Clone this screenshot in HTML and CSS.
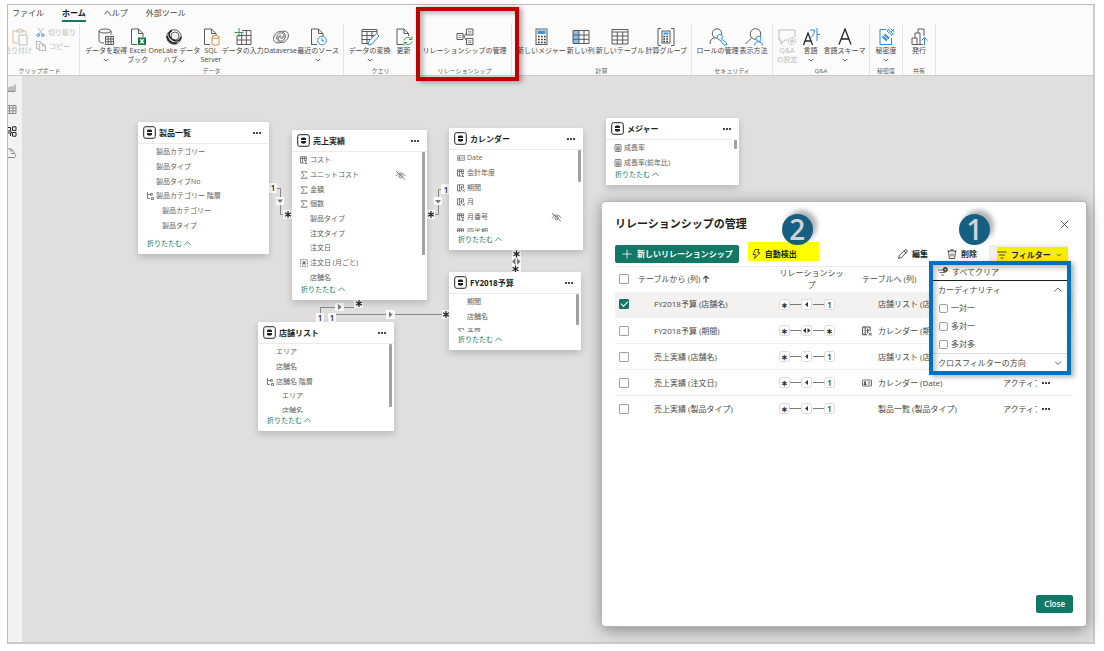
FILE: index.html
```html
<!DOCTYPE html>
<html lang="ja">
<head>
<meta charset="utf-8">
<title>リレーションシップの管理</title>
<link rel="stylesheet" href="styles.css">
</head>
<body>
<svg class="defs" aria-hidden="true">
  <defs>
    <symbol id="chev-down" viewBox="0 0 8 8"><path d="M1 2.500 4 5.500 7 2.500"/></symbol>
    <symbol id="chev-up" viewBox="0 0 8 8"><path d="M.5 5.500 4 2 7.500 5.500"/></symbol>
    <symbol id="table-badge" viewBox="0 0 13 13"><rect x=".7" y=".7" width="11.600" height="11.600" rx="2"/><path class="solid" d="M4 4.600C4 3 9 3 9 4.600V6H4zM4 7h5v1.500c0 1.500-5 1.500-5 0z"/></symbol>
    <symbol id="sigma" viewBox="0 0 8 8"><path d="M6.800 2V.8H1.200L4.200 4 1.200 7.300h5.600V6"/></symbol>
    <symbol id="calc-col" viewBox="0 0 8 8"><path d="M4 7H.5V.8h6v2.700M.5 2.600h6M2.500.8V7M4.500.8v3M4 4.400h2.800L5 6l2 1.600H4.500"/></symbol>
    <symbol id="fx-col" viewBox="0 0 8 8"><path d="M4 7H.5V.8h6v3.500M2.500.8V7M4.500 2v4M3.500 3.500h2M5.500 5.300l2.300 2.400M7.800 5.300 5.500 7.700"/></symbol>
    <symbol id="hier" viewBox="0 0 8 8"><path d="M1.500 0v6.500H4M1.500 2.500H4M4.500 1.500h1.800v1.800H4.500zM5.500 5.500h2v2h-2z"/></symbol>
    <symbol id="id-card" viewBox="0 0 10 8"><rect x=".5" y="1" width="9" height="6" rx=".5"/><path d="M5.800 3h2.500M5.800 5h2.500"/><path class="solid" d="M2 2.500h2v1.700H2zM1.700 4.600h2.700V6H1.700z"/></symbol>
    <symbol id="spark" viewBox="0 0 8 8"><path stroke-dasharray="1.500 1" d="M.6.600h6.800v6.800H.6z"/><path d="M4 1.800v4.400M1.800 4h4.400M2.500 2.500l3 3M5.500 2.500l-3 3"/></symbol>
    <symbol id="measure" viewBox="0 0 8 8"><rect x="1" y=".5" width="6" height="7" rx=".8"/><path d="M2.200 2.200h3.600M2.200 4h3.600M2.200 5.800h3.600M3 3.500v3M5 3.500v3"/></symbol>
    <symbol id="hidden" viewBox="0 0 11 10"><path d="M1 6C3 2 8 2 10 6M1 1l9 8.500"/><circle cx="5.500" cy="6" r="1.700"/></symbol>
    <symbol id="rel-one" viewBox="0 0 56 11"><path class="line" d="M10 5.500h12M34 5.500h12"/><rect x=".5" y=".5" width="10" height="10" rx="2"/><rect x="22.500" y=".5" width="10" height="10" rx="2"/><rect x="45.500" y=".5" width="10" height="10" rx="2"/><path class="solid" d="M29 3v5l-3-2.500z"/></symbol>
    <symbol id="rel-many" viewBox="0 0 56 11"><path class="line" d="M10 5.500h12M34 5.500h12"/><rect x=".5" y=".5" width="10" height="10" rx="2"/><rect x="22.500" y=".5" width="10" height="10" rx="2"/><rect x="45.500" y=".5" width="10" height="10" rx="2"/><path class="solid" d="M27 3v5l-3-2.500zM28.500 3v5l3-2.500z"/></symbol>
  </defs>
</svg>

<div class="app">
  <header class="ribbon">
    <nav class="tabs">
      <button class="tab">ファイル</button>
      <button class="tab tab-active">ホーム</button>
      <button class="tab">ヘルプ</button>
      <button class="tab">外部ツール</button>
    </nav>
    <div class="groups">
      <section class="group group-clip">
        <div class="tools">
          <button class="tool tool-paste dim"><svg class="ico" viewBox="0 0 18 18"><path class="or" d="M6 3H2v12h5M12 3h3v3"/><path d="M6 4V2h2c0-1.500 2-1.500 2 0h2v2zM8 7h8v10H8z"/></svg><span>貼り付け</span></button>
          <div class="clip-small">
            <button class="mini dim"><svg viewBox="0 0 9 9"><path d="M2 0l4 6M7 0 3 6"/><circle class="bl" cx="2.200" cy="7.200" r="1.300"/><circle class="bl" cx="6.800" cy="7.200" r="1.300"/></svg>切り取り</button>
            <button class="mini dim"><svg viewBox="0 0 9 9"><path d="M3 7H.5V.5H4l1 1M3 2.500h3.500l2 2v4H3zM6 2.500v2h2.500"/></svg>コピー</button>
          </div>
        </div>
        <h2>クリップボード</h2>
      </section>
      <section class="group group-data">
        <div class="tools">
          <button class="tool"><svg class="ico" viewBox="0 0 18 18"><ellipse cx="8" cy="3" rx="6" ry="2"/><path d="M2 3v10c0 1 2 2 5 2M14 3v4"/><path d="M8.500 8.500h8v8h-8zM8.500 11h8M8.500 13.700h8M11.200 8.500v8M13.900 8.500v8"/></svg><span>データを取得</span><svg class="chev"><use href="#chev-down"/></svg></button>
          <button class="tool"><svg class="ico" viewBox="0 0 18 18"><path d="M8 16.500H2.500V1h7l4.500 4.500V9M9.500 1v4.500H14"/><path class="grf" d="M9 9.500h8V17H9z"/><path class="wh" d="m11.300 11.200 3.400 4.200M14.700 11.200l-3.400 4.200"/></svg><span>Excel<br>ブック</span></button>
          <button class="tool"><svg class="ico" viewBox="0 0 18 18"><circle cx="9" cy="9" r="7.300"/><circle cx="10" cy="8" r="4"/><path class="heavy" d="M7 2.500C2 5 4 10 8 12s7 1 8-3M2 8c1 5 5 8 10 7"/></svg><span>OneLake データ<br>ハブ <svg class="chev chev-in"><use href="#chev-down"/></svg></span></button>
          <button class="tool"><svg class="ico" viewBox="0 0 18 18"><path d="M8 16.500H2.500V1h7l4.500 4.500V7M9.500 1v4.500H14"/><path class="or fillw" d="M10 9v7c0 1.500 7 1.500 7 0V9"/><ellipse class="or fillw" cx="13.500" cy="9" rx="3.500" ry="1.500"/></svg><span>SQL<br>Server</span></button>
          <button class="tool"><svg class="ico" viewBox="0 0 18 18"><path d="M8 2.500h9v14H3V8M3 7.500h14M8 12h9M3 12h5M7.700 5v11.500M12.400 2.500v14"/><path class="gr" d="M5 0v9M.5 4.500h9"/></svg><span>データの入力</span></button>
          <button class="tool"><svg class="ico" viewBox="0 0 18 18"><path d="M7.500 14.800C3 15.500.8 12.500 1.800 9 3 4.500 8 2 11.500 4.500c3 2.300 2 7-1 8.300-2.500 1-5-.8-4.300-3.300.6-2 3.300-2.300 4-.7M10.500 3.200c4.500-.7 6.700 2.300 5.700 5.800-1.200 4.500-6.200 7-9.700 4.500-3-2.300-2-7 1-8.300 2.500-1 5 .8 4.300 3.300-.6 2-3.300 2.300-4 .7"/></svg><span>Dataverse</span></button>
          <button class="tool"><svg class="ico" viewBox="0 0 18 18"><path d="M8 16.500H2.500V1h7l4.500 4.500V8M9.500 1v4.500H14"/><circle class="bl fillw" cx="13" cy="12.500" r="4.300"/><path class="bl" d="M13 10v3h2"/></svg><span>最近のソース</span><svg class="chev"><use href="#chev-down"/></svg></button>
        </div>
        <h2>データ</h2>
      </section>
      <section class="group group-query">
        <div class="tools">
          <button class="tool"><svg class="ico" viewBox="0 0 18 18"><path d="M16 6V1.500H1v14h6M1 3.500h15M1 7.500h13M1 11.500h9M6 3v12M11 3v7"/><path class="bl fillw" d="m8 13-1 4 4-1 7-8-2.500-2.500z"/></svg><span>データの変換</span><svg class="chev"><use href="#chev-down"/></svg></button>
          <button class="tool"><svg class="ico" viewBox="0 0 18 18"><path d="M8 16.500H2V1h7l4.500 4.500V8M9 1v4.500h4.500"/><path class="gr" d="M9 12.500c1-4 6-4 7.500-1M17 8.500v3h-3M17 13.500c-1 4-6 4-7.500 1M9 17.500v-3h3"/></svg><span>更新</span></button>
        </div>
        <h2>クエリ</h2>
      </section>
      <section class="group group-rel">
        <div class="tools">
          <button class="tool"><svg class="ico" viewBox="0 0 18 18"><path d="M1 5.500h6v6H1zM10.500 1h6.500v6h-6.500zM10.500 10.500h6.500v6h-6.500zM7 8h2M10.500 5 8 8.500l2.500 4"/><path class="gy" d="M2.500 7.500h3M2.500 9.500h3M12 3.300h3.500M12 5h3.500M12 12.800h3.500M12 14.500h3.500"/></svg><span>リレーションシップの管理</span></button>
        </div>
        <h2>リレーションシップ</h2>
      </section>
      <section class="group group-calc">
        <div class="tools">
          <button class="tool"><svg class="ico" viewBox="0 0 18 18"><rect x="4" y="1" width="11" height="15.500"/><path class="blf" d="M5.500 2.500h8V6h-8z"/><path class="dots" d="M6 8.500h8M6 11.500h8M6 14.500h8"/></svg><span>新しいメジャー</span></button>
          <button class="tool"><svg class="ico" viewBox="0 0 18 18"><path class="blp" d="M1 2.500h6v13H1z"/><path d="M1 2.500h16v13H1zM1 7h16M1 11.300h16M7 2.500v13M12 2.500v13"/></svg><span>新しい列</span></button>
          <button class="tool"><svg class="ico" viewBox="0 0 18 18"><path d="M1 1.500h16v14.500H1zM1 4h16M1 8h16M1 12h16M6.300 4v12M11.700 4v12"/></svg><span>新しいテーブル</span></button>
          <button class="tool"><svg class="ico" viewBox="0 0 18 18"><path d="M4 .5H1v17h3M14 .5h3v17h-3"/><rect x="5" y="3" width="8" height="12"/><path class="blf" d="M6.500 4.500h5v2h-5z"/><path class="dots" d="M6.300 8.500h5.500M6.300 11h5.500M6.300 13.400h5.500"/></svg><span>計算グループ</span></button>
        </div>
        <h2>計算</h2>
      </section>
      <section class="group group-sec">
        <div class="tools">
          <button class="tool"><svg class="ico" viewBox="0 0 18 18"><circle cx="8" cy="5.500" r="4.700"/><path d="M1 16c0-4 2-6 5-6.500"/><path class="bl fillw" d="M8.500 9a2.500 2.500 0 1 1 4 2l5 4v2h-2.500l-4-5c-1.500 0-2.500-1-2.500-3z"/></svg><span>ロールの管理</span></button>
          <button class="tool"><svg class="ico" viewBox="0 0 18 18"><circle cx="10.500" cy="6" r="5.300"/><path d="m6.500 10-6 6"/><circle class="bl fillw" cx="13.500" cy="10.800" r="2.500"/><path class="bl" d="M9.500 17.500c0-5 8-5 8 0"/></svg><span>表示方法</span></button>
        </div>
        <h2>セキュリティ</h2>
      </section>
      <section class="group group-qa">
        <div class="tools">
          <button class="tool dim"><svg class="ico" viewBox="0 0 18 18"><path d="M9 12H7l-4 4v-4H1V2h16v7"/><circle cx="14" cy="13" r="1.300"/><circle cx="14" cy="13" r="3.500" stroke-dasharray="2 .7"/></svg><span>Q&amp;A<br>の設定</span></button>
          <button class="tool"><svg class="ico" viewBox="0 0 18 18"><path class="dark" d="m1.500 17 4.500-12 4.500 12M3 13h6"/><path class="bl" d="M8 2h4.500c0 4-1.500 6-4 8M15 0v13M15 6.500h3"/></svg><span>言語</span><svg class="chev"><use href="#chev-down"/></svg></button>
          <button class="tool"><svg class="ico" viewBox="0 0 18 18"><path class="dark" d="M3 16.500 9 1l6 15.500M5.300 11h7.400"/></svg><span>言語スキーマ</span><svg class="chev"><use href="#chev-down"/></svg></button>
        </div>
        <h2>Q&amp;A</h2>
      </section>
      <section class="group group-one">
        <div class="tools">
          <button class="tool"><svg class="ico" viewBox="0 0 18 18"><path class="bl" d="M9.500 1.500H3v15h11.500V10"/><path class="bl2" d="m5.500 8.500 4.500 4M7.500 6.500l4.500 4"/><path class="bl" d="m10 3 5 4.500M11 1.500l5 4.500M13.500.5l4 3.500M17 1l-3 3M10 3l2-2M15 7.500l2-2"/></svg><span>秘密度</span><svg class="chev"><use href="#chev-down"/></svg></button>
        </div>
        <h2>秘密度</h2>
      </section>
      <section class="group group-one">
        <div class="tools">
          <button class="tool"><svg class="ico" viewBox="0 0 18 18"><path d="M2 10h5v6.500H2zM5 10V5h5v11.500H7M8 5V1h6v7M10 16.500h3"/><path class="bl" d="M14.500 17.500V9.500M11.500 12.500l3-3 3 3"/></svg><span>発行</span></button>
        </div>
        <h2>共有</h2>
      </section>
    </div>
  </header>

  <div class="workspace">
    <aside class="rail">
      <button aria-label="レポート"><svg viewBox="0 0 9 11"><path d="M0 9.500h7V2.500M5 9.500v-5M3 9.500V4M1 9.500V5"/></svg></button>
      <button aria-label="テーブル"><svg viewBox="0 0 9 11"><path d="M0 1.500h8v8H0M0 4h8M0 6.800h8M1.500 1.500v8M5 1.500v8"/></svg></button>
      <button aria-label="モデル" class="on"><svg viewBox="0 0 9 11"><path d="M0 1.500h2.500V5H0M4.500.8H8v3.700H4.500zM4.500 6.500H8v3.700H4.500zM0 7h2.500v3M2.500 5 4.500 8"/></svg></button>
      <button aria-label="クエリ"><svg viewBox="0 0 9 11"><path d="M0 1h3l3 2.500V5.500M0 9.500h6.500c2-1 1-4-.5-4H3M3 1v3"/></svg></button>
    </aside>

    <main class="canvas">
      <svg class="links" viewBox="22 76 600 400">
        <path class="wire" d="M276 188.500h4.500v26h6M442 189.500h-3.500v25h-5M355 307.500h-34.500v8M335 314.500h108"/>
        <g class="chip"><rect x="268" y="183" width="9" height="10"/><rect x="276" y="197" width="8" height="8"/><rect x="283" y="210" width="9" height="9"/><rect x="441" y="184" width="9" height="10"/><rect x="434" y="197" width="8" height="8"/><rect x="427" y="210" width="8" height="9"/><rect x="512" y="249" width="9" height="24"/><rect x="354" y="299" width="9" height="9"/><rect x="335" y="303" width="9" height="8"/><rect x="316" y="313" width="8" height="10"/><rect x="328" y="313" width="8" height="10"/><rect x="386" y="310" width="9" height="9"/><rect x="442" y="310" width="8" height="9"/></g>
        <path class="arrow" d="M277 199.500h6l-3 3.500zM435 200h6l-3 3.500zM338 304v6l3.500-3zM389 311.500v6l3.500-3zM515.500 258v7l-3.500-3.500zM517 258v7l3.500-3.500z"/>
        <path class="star" d="M288 211v7M285 212.800l6 3.400M291 212.800l-6 3.400M431 211v7M428 212.800l6 3.400M434 212.800l-6 3.400M516.500 250.500v7M513.500 252.300l6 3.400M519.500 252.300l-6 3.400M515.500 265.500v7M512.500 267.300l6 3.400M518.500 267.300l-6 3.400M359 300v7M356 301.800l6 3.400M362 301.800l-6 3.400M446 311v7M443 312.800l6 3.400M449 312.800l-6 3.400"/>
        <g class="num"><text x="273" y="191">1</text><text x="446" y="193">1</text><text x="320" y="321">1</text><text x="332" y="321">1</text></g>
      </svg>

      <article class="card card-product">
        <header><svg class="badge"><use href="#table-badge"/></svg><h3>製品一覧</h3><button class="more" aria-label="その他"></button></header>
        <div class="fields">
          <ul class="rows6"><li><i></i>製品カテゴリー</li><li><i></i>製品タイプ</li><li><i></i>製品タイプNo</li><li><svg><use href="#hier"/></svg>製品カテゴリー 階層</li><li class="sub"><i></i>製品カテゴリー</li><li class="sub"><i></i>製品タイプ</li></ul>
        </div>
        <button class="fold">折りたたむ <svg><use href="#chev-up"/></svg></button>
      </article>

      <article class="card card-sales">
        <header><svg class="badge"><use href="#table-badge"/></svg><h3>売上実績</h3><button class="more" aria-label="その他"></button></header>
        <div class="fields">
          <ul class="rows9"><li><svg><use href="#calc-col"/></svg>コスト</li><li><svg><use href="#sigma"/></svg>ユニットコスト<svg class="eye"><use href="#hidden"/></svg></li><li><svg><use href="#sigma"/></svg>金額</li><li><svg><use href="#sigma"/></svg>個数</li><li><i></i>製品タイプ</li><li><i></i>注文タイプ</li><li><i></i>注文日</li><li><svg><use href="#spark"/></svg>注文日 (月ごと)</li><li><i></i>店舗名</li></ul>
          <span class="thumb"></span>
        </div>
        <button class="fold">折りたたむ <svg><use href="#chev-up"/></svg></button>
      </article>

      <article class="card card-calendar">
        <header><svg class="badge"><use href="#table-badge"/></svg><h3>カレンダー</h3><button class="more" aria-label="その他"></button></header>
        <div class="fields">
          <ul class="rows6"><li><svg><use href="#id-card"/></svg>Date</li><li><svg><use href="#calc-col"/></svg>会計年度</li><li><svg><use href="#fx-col"/></svg>期間</li><li><svg><use href="#fx-col"/></svg>月</li><li><svg><use href="#calc-col"/></svg>月番号<svg class="eye"><use href="#hidden"/></svg></li><li><svg><use href="#calc-col"/></svg>四半期</li></ul>
          <span class="thumb"></span>
        </div>
        <button class="fold">折りたたむ <svg><use href="#chev-up"/></svg></button>
      </article>

      <article class="card card-budget">
        <header><svg class="badge"><use href="#table-badge"/></svg><h3>FY2018予算</h3><button class="more" aria-label="その他"></button></header>
        <div class="fields">
          <ul class="rows3"><li><i></i>期間</li><li><i></i>店舗名</li><li><svg><use href="#sigma"/></svg>予算</li></ul>
          <span class="thumb"></span>
        </div>
        <button class="fold">折りたたむ <svg><use href="#chev-up"/></svg></button>
      </article>

      <article class="card card-store">
        <header><svg class="badge"><use href="#table-badge"/></svg><h3>店舗リスト</h3><button class="more" aria-label="その他"></button></header>
        <div class="fields">
          <ul class="rows6"><li><i></i>エリア</li><li><i></i>店舗名</li><li><svg><use href="#hier"/></svg>店舗名 階層</li><li class="sub"><i></i>エリア</li><li class="sub"><i></i>店舗名</li></ul>
          <span class="thumb"></span>
        </div>
        <button class="fold">折りたたむ <svg><use href="#chev-up"/></svg></button>
      </article>

      <article class="card card-measure">
        <header><svg class="badge"><use href="#table-badge"/></svg><h3>メジャー</h3><button class="more" aria-label="その他"></button></header>
        <div class="fields">
          <ul class="rows3"><li><svg><use href="#measure"/></svg>成長率</li><li><svg><use href="#measure"/></svg>成長率(前年比)</li></ul>
          <span class="thumb"></span>
        </div>
        <button class="fold">折りたたむ <svg><use href="#chev-up"/></svg></button>
      </article>

      <section class="dialog" role="dialog" aria-labelledby="dlg-title">
        <div class="dlg-head">
          <h1 id="dlg-title">リレーションシップの管理</h1>
          <button class="close-x" aria-label="閉じる"><svg viewBox="0 0 10 10"><path d="m1 1 8 8M9 1 1 9"/></svg></button>
        </div>
        <div class="toolbar">
          <button class="primary"><svg viewBox="0 0 10 10"><path d="M5 .5v9M.5 5h9"/></svg>新しいリレーションシップ</button>
          <div class="auto"><button><svg viewBox="0 0 10 10"><path d="M4 .5h4L6.800 3.700H9L3.500 9.500l1-4H2z"/></svg>自動検出</button><span class="step step-two">2</span></div>
          <button class="plain push"><svg viewBox="0 0 10 10"><path d="m.5 9.500.8-3L7 .8c1-1 3 1 2 2L3.500 8.500zM6 2l2 2"/></svg>編集</button>
          <button class="plain"><svg viewBox="0 0 10 10"><path d="M.5 2h9M3.500 2c0-2 3-2 3 0M1.500 2l.8 7.500h5.400L8.500 2M4 4.500v3M6 4.500v3"/></svg>削除</button>
          <div class="filter"><button><svg viewBox="0 0 10 10"><path d="M.5 2h9M2 5h6M3.500 8h3"/></svg>フィルター<svg class="fchev"><use href="#chev-down"/></svg></button><span class="step step-one">1</span>
            <div class="menu">
              <button class="clear"><svg viewBox="0 0 10 10"><path d="M0 3h5M1.500 5.500h6M3 8h3"/><circle class="solid" cx="7.300" cy="2.500" r="2.500"/><circle class="hole" cx="7.300" cy="2.500" r=".8"/></svg>すべてクリア</button>
              <button class="sect">カーディナリティ<svg><use href="#chev-up"/></svg></button>
              <label><input type="checkbox">一対一</label>
              <label><input type="checkbox">多対一</label>
              <label><input type="checkbox">多対多</label>
              <button class="sect sect-last">クロスフィルターの方向<svg><use href="#chev-down"/></svg></button>
            </div>
          </div>
        </div>
        <table>
          <colgroup><col class="c-check"><col class="c-from"><col class="c-rel"><col class="c-to"><col class="c-state"><col class="c-more"></colgroup>
          <thead><tr><th><input type="checkbox" aria-label="すべて選択"></th><th>テーブルから (列) <svg class="sort" viewBox="0 0 8 8"><path d="M4 7.500V1M1.300 3.700 4 1l2.700 2.700"/></svg></th><th class="rel">リレーションシップ</th><th>テーブルへ (列)</th><th></th><th></th></tr></thead>
          <tbody>
            <tr class="sel"><td><input type="checkbox" checked aria-label="FY2018予算 (店舗名)"></td><td class="from">FY2018予算 (店舗名)</td><td><span class="pict"><svg><use href="#rel-one"/></svg><b>∗</b><b>1</b></span></td><td><span class="to"><i></i>店舗リスト (店舗名)</span></td><td>アクティブ</td><td><button class="more" aria-label="その他"></button></td></tr>
            <tr><td><input type="checkbox" aria-label="FY2018予算 (期間)"></td><td class="from">FY2018予算 (期間)</td><td><span class="pict"><svg><use href="#rel-many"/></svg><b>∗</b><b>∗</b></span></td><td><span class="to"><svg><use href="#fx-col"/></svg>カレンダー (期間)</span></td><td>アクティブ</td><td><button class="more" aria-label="その他"></button></td></tr>
            <tr><td><input type="checkbox" aria-label="売上実績 (店舗名)"></td><td class="from">売上実績 (店舗名)</td><td><span class="pict"><svg><use href="#rel-one"/></svg><b>∗</b><b>1</b></span></td><td><span class="to"><i></i>店舗リスト (店舗名)</span></td><td>アクティブ</td><td><button class="more" aria-label="その他"></button></td></tr>
            <tr><td><input type="checkbox" aria-label="売上実績 (注文日)"></td><td class="from">売上実績 (注文日)</td><td><span class="pict"><svg><use href="#rel-one"/></svg><b>∗</b><b>1</b></span></td><td><span class="to"><svg><use href="#id-card"/></svg>カレンダー (Date)</span></td><td>アクティブ</td><td><button class="more" aria-label="その他"></button></td></tr>
            <tr><td><input type="checkbox" aria-label="売上実績 (製品タイプ)"></td><td class="from">売上実績 (製品タイプ)</td><td><span class="pict"><svg><use href="#rel-one"/></svg><b>∗</b><b>1</b></span></td><td><span class="to"><i></i>製品一覧 (製品タイプ)</span></td><td>アクティブ</td><td><button class="more" aria-label="その他"></button></td></tr>
          </tbody>
        </table>
        <footer><button class="primary done">Close</button></footer>
      </section>
    </main>
  </div>
</div>
</body>
</html>
```

FILE: styles.css
```css
* { box-sizing: border-box; }

body {
  margin: 0;
  padding: 4px 9px 7px 7px;
  min-height: 100vh;
  display: flex;
  background: #fff;
  color: #484644;
  font: 8px/12px "Open Sans", "Noto Sans CJK JP", sans-serif;
}

button {
  border: 0;
  margin: 0;
  padding: 0;
  background: none;
  color: inherit;
  font: inherit;
}

h1, h2, h3, ul { margin: 0; padding: 0; }

svg {
  fill: none;
  stroke: currentColor;
  stroke-width: 1;
  flex: none;
}

.defs { position: absolute; width: 0; height: 0; }
.solid { fill: currentColor; stroke: none; }

input[type="checkbox"] {
  appearance: none;
  display: block;
  width: 10px;
  height: 10px;
  margin: 0;
  border: 1px solid #a19f9d;
  border-radius: 1px;
  background: #fff;
}

.app {
  flex: 1;
  min-width: 0;
  display: flex;
  flex-direction: column;
  border: 1px solid #bebdbc;
  border-width: 1px 2px 2px 1px;
  border-right-color: #cbcac9;
  border-bottom-color: #cbcac9;
}

/* Ribbon */
.ribbon {
  background: #fbfbfb;
  border-bottom: 1px solid #cccbca;
}

.tabs {
  display: flex;
  gap: 18px;
  padding-left: 4px;
  height: 19px;
}

.tab {
  height: 17px;
  border-bottom: 2px solid transparent;
  line-height: 15px;
  white-space: nowrap;
}

.tab-active {
  border-color: #117865;
  color: #111;
  font-weight: 700;
}

.groups { display: flex; height: 51px; }

.group {
  position: relative;
  flex: none;
  display: flex;
  flex-direction: column;
  justify-content: space-between;
  border-right: 1px solid #e6e5e4;
}

.group h2 {
  color: #605e5c;
  font-size: 6px;
  font-weight: 400;
  line-height: 8px;
  text-align: center;
}

.group-clip { width: 72px; }
.group-clip h2 { padding-right: 8px; }
.group-data { width: 264px; }
.group-query { width: 74px; }
.group-rel { width: 94px; }
.group-calc { width: 180px; }
.group-sec { width: 81px; }
.group-qa { width: 97px; }
.group-one { width: 33px; }

.tools {
  display: flex;
  justify-content: center;
  gap: 4px;
  padding-top: 4px;
}

.group-clip .tools { justify-content: flex-start; }
.group-data .tools,
.group-calc .tools { justify-content: space-between; gap: 0; padding: 4px 4px 0 5px; }
.group-sec .tools { gap: 1px; }

.tool {
  display: flex;
  flex-direction: column;
  align-items: center;
  font-size: 7px;
  line-height: 9px;
  white-space: nowrap;
}

.tool-paste { width: 24px; overflow: hidden; align-items: flex-end; }
.tool-paste .ico { margin-right: 3px; }

.ico { width: 18px; height: 18px; color: #5d5b59; }
.dim { color: #bdbbb9; }
.dim .ico, .dim svg { color: inherit; }
.chev { width: 6px; height: 6px; margin-top: 2px; stroke-width: 1.200; }
.chev-in { display: inline-block; margin: 0; vertical-align: -2px; }

.clip-small { display: flex; flex-direction: column; gap: 4px; }
.mini { display: flex; align-items: center; gap: 3px; font-size: 7px; line-height: 9px; white-space: nowrap; }
.mini svg { width: 9px; height: 9px; }
.mini:last-child svg { width: 10px; height: 10px; }

.bl { stroke: #2e8fd6; }
.bl2 { stroke: #2e8fd6; stroke-width: 2; }
.gr { stroke: #3a9c55; }
.or { stroke: #e08a3c; }
.dim .or { stroke: #edc184; }
.gy { stroke: #9a9896; }
.wh { stroke: #fff; stroke-width: 1.500; }
.grf { fill: #107c41; stroke: none; }
.blf { fill: #3a96dd; stroke: none; }
.blp { fill: #83beec; stroke: none; }
.fillw { fill: #fbfbfb; }
.dark { stroke: #252423; stroke-width: 1.300; }
.heavy { stroke: #252423; stroke-width: 1.700; }
.dots { stroke: #3b3a39; stroke-width: 1.500; stroke-dasharray: 1.700 1.300; }

.group-rel::after {
  content: "";
  position: absolute;
  inset: -17px -8px -6px -2px;
  border: 4px solid #c00000;
  box-shadow: 3px 1px 5px rgba(0, 0, 0, 0.350), inset 3px 2px 5px rgba(0, 0, 0, 0.300);
  z-index: 5;
  pointer-events: none;
}

/* Workspace */
.workspace { flex: 1; display: flex; }

.rail {
  width: 14px;
  background: #f3f2f1;
  display: flex;
  flex-direction: column;
  color: #8a8886;
}

.rail button { display: flex; height: 22px; align-items: center; }
.rail svg { width: 9px; height: 11px; }
.rail .on { color: #252423; }

.canvas {
  position: relative;
  flex: 1;
  min-width: 0;
  background: #e0dfdd;
}

.links { position: absolute; left: 0; top: 0; width: 600px; height: 400px; }
.wire { stroke: #8a8886; }
.chip { fill: #fafafa; stroke: none; }
.arrow { fill: #7a7876; stroke: none; }
.star { stroke: #252423; stroke-width: 1.200; }
.num { fill: #252423; stroke: none; font-size: 8px; font-weight: 600; text-anchor: middle; }

.card {
  position: absolute;
  background: #fff;
  border-radius: 1px;
  box-shadow: 0 3px 7px rgba(0, 0, 0, 0.180);
}

.card header {
  display: flex;
  align-items: center;
  height: 22px;
  padding: 0 7px 0 5px;
  border-bottom: 1px solid #ecebea;
  color: #201f1e;
}

.badge { width: 13px; height: 13px; margin-right: 3px; }
.card h3 { flex: 1; font-size: 8px; font-weight: 700; white-space: nowrap; }

.more { display: flex; width: 9px; height: 9px; align-items: center; }
.more::before {
  content: "";
  width: 8px;
  height: 2px;
  background: radial-gradient(circle at 1px 1px, #484644 1px, transparent 1px) 0 0 / 3px 2px;
}

.fields { position: relative; overflow: hidden; padding-top: 1px; }
.fields ul { display: grid; list-style: none; font-size: 7px; line-height: 10px; color: #605e5c; }
.rows3 { height: 44px; grid-template-rows: repeat(3, 1fr); }
.rows6 { height: 88px; grid-template-rows: repeat(6, 1fr); }
.rows9 { height: 132px; grid-template-rows: repeat(9, 1fr); }

.fields li { display: flex; align-items: center; gap: 2px; padding-left: 8px; white-space: pre; }
.fields li svg, .fields li i { width: 8px; height: 8px; stroke-width: 0.800; }
.fields .sub { padding-left: 14px; }
.fields li .eye { width: 11px; height: 10px; margin: 0 21px 0 auto; }

.thumb {
  position: absolute;
  top: 0;
  right: 2px;
  width: 3px;
  border-radius: 1px;
  background: #a3a19f;
}

.fold {
  display: flex;
  align-items: center;
  gap: 2px;
  padding: 2px 9px 5px;
  color: #117865;
  font-size: 7px;
  line-height: 11px;
}
.fold svg { width: 7px; height: 7px; stroke-width: 0.900; }

.card-product { left: 116px; top: 46px; width: 131px; }
.card-product .fields { height: 92px; }
.card-sales { left: 270px; top: 54px; width: 135px; }
.card-sales .fields { height: 130px; }
.card-sales .thumb { height: 103px; }
.card-calendar { left: 427px; top: 52px; width: 134px; }
.card-calendar .fields { height: 82px; }
.card-calendar .thumb { height: 32px; }
.card-budget { left: 427px; top: 196px; width: 132px; }
.card-budget .fields { height: 38px; }
.card-budget .thumb { height: 31px; }
.card-store { left: 236px; top: 246px; width: 136px; }
.card-store .fields { height: 69px; }
.card-store .thumb { height: 63px; }
.card-measure { left: 584px; top: 42px; width: 133px; }
.card-measure .fields { height: 27px; }
.card-measure .thumb { height: 9px; }

/* Dialog */
.dialog {
  position: absolute;
  left: 580px;
  right: 6px;
  top: 125px;
  bottom: 15px;
  display: flex;
  flex-direction: column;
  padding: 13px;
  border: 1px solid #b5b4b2;
  border-left-width: 0;
  border-radius: 4px;
  background: #fff;
  box-shadow: 0 3px 16px rgba(0, 0, 0, 0.400);
}

.dlg-head { display: flex; align-items: center; justify-content: space-between; height: 18px; }
.dlg-head h1 { color: #201f1e; font-size: 11px; font-weight: 700; line-height: 16px; }
.close-x { width: 18px; height: 18px; display: grid; place-items: center; }
.close-x svg { width: 9px; height: 9px; }

.toolbar {
  display: flex;
  align-items: center;
  height: 18px;
  margin-top: 12px;
  color: #201f1e;
  font-weight: 700;
  white-space: nowrap;
}

.toolbar button { display: flex; align-items: center; gap: 4px; }
.toolbar button svg { width: 10px; height: 10px; stroke-width: 0.800; }

.primary {
  height: 18px;
  padding: 0 7px;
  border-radius: 2px;
  background: #117865;
  color: #fff;
  font-weight: 700;
}
.toolbar .primary { gap: 5px; padding: 0 6px 0 7px; }

.auto { position: relative; margin: 0 0 5px 9px; background: #ff0; }
.auto button { height: 19px; width: 71px; padding: 4px 0 0 3px; }

.plain { padding-right: 12px; }
.toolbar .push { margin-left: auto; padding-right: 19px; }

.filter { position: relative; background: #f0efee; padding: 2px 0 0 8px; margin-right: 5px; height: 18px; }
.filter > button { width: 71px; height: 16px; padding-right: 6px; background: #f4ef00; }
.toolbar .filter .fchev { width: 6px; height: 6px; margin-left: auto; }

.step {
  position: absolute;
  width: 31px;
  height: 31px;
  border-radius: 50%;
  background: #156082;
  color: #d0d3d6;
  font: 600 28px/30px "Open Sans", sans-serif;
  text-align: center;
  box-shadow: 4px -4px 5px rgba(0, 0, 0, 0.300);
}
.step-two { left: 34px; top: -28px; }
.step-one { left: -30px; top: -31px; }

.menu {
  position: absolute;
  right: -3px;
  top: 16px;
  z-index: 3;
  width: 142px;
  border: 4px solid #0070c0;
  background: #fff;
  color: #484644;
  font-weight: 400;
  box-shadow: 3px 2px 5px rgba(0, 0, 0, 0.300);
}
.menu::after {
  content: "";
  position: absolute;
  inset: 0;
  box-shadow: inset 3px 3px 5px rgba(0, 0, 0, 0.250);
  pointer-events: none;
}
.menu .clear { width: 100%; height: 16px; padding: 0 5px 1px; border-bottom: 1px solid #201f1e; }
.menu .clear .hole { fill: #fff; stroke: none; }
.menu .sect { width: 100%; height: 18px; padding: 0 5px; justify-content: space-between; }
.menu .sect svg { width: 8px; height: 8px; }
.menu label { display: flex; align-items: center; gap: 3px; height: 18px; padding-left: 6px; }
.menu label input { width: 9px; height: 9px; border-radius: 2px; }
.menu .sect-last { border-top: 1px solid #e1dfdd; }

table {
  width: 100%;
  margin-top: 3px;
  border-collapse: collapse;
  table-layout: fixed;
  border-top: 1px solid #e8e7e6;
}
.c-check { width: 23px; }
.c-rel { width: 83px; }
.c-state { width: 34px; }
.c-more { width: 36px; }

th, td { padding: 0; overflow: hidden; font-weight: 400; text-align: left; white-space: nowrap; }
th { height: 25px; line-height: 12px; }
th:first-child, td:first-child { padding-left: 4px; }
th.rel { padding-right: 18px; text-align: center; white-space: normal; }
td { height: 26px; border-bottom: 1px solid #f0efee; }
tr:last-child td { border-bottom: 0; }
.sel td { background: #f3f2f1; }
.sort { width: 8px; height: 8px; vertical-align: -1px; stroke-width: 1.200; }
td.from { padding-left: 16px; }
td:last-child { padding-left: 5px; }

input[type="checkbox"]:checked {
  border-color: #117865;
  background: #117865;
  display: grid;
  place-items: center;
}
input[type="checkbox"]:checked::before {
  content: "";
  width: 6px;
  height: 3px;
  margin-bottom: 2px;
  border: solid #fff;
  border-width: 0 0 1px 1px;
  transform: rotate(-45deg);
}

.pict { position: relative; display: flex; justify-content: space-between; width: 56px; height: 11px; color: #323130; }
.pict svg { position: absolute; inset: 0; width: 56px; height: 11px; }
.pict b { position: relative; width: 11px; font-size: 8px; font-weight: 600; line-height: 11px; text-align: center; }
#rel-one rect, #rel-many rect { fill: #fff; stroke: #dddbd9; }
.line { stroke: #7a7876; }

.to { display: flex; align-items: center; gap: 6px; }
.to svg, .to i { width: 10px; height: 10px; flex: none; stroke-width: 0.800; }

.dialog footer { display: flex; justify-content: flex-end; margin-top: auto; }
.done { padding: 0 8px; font-weight: 600; }
```
